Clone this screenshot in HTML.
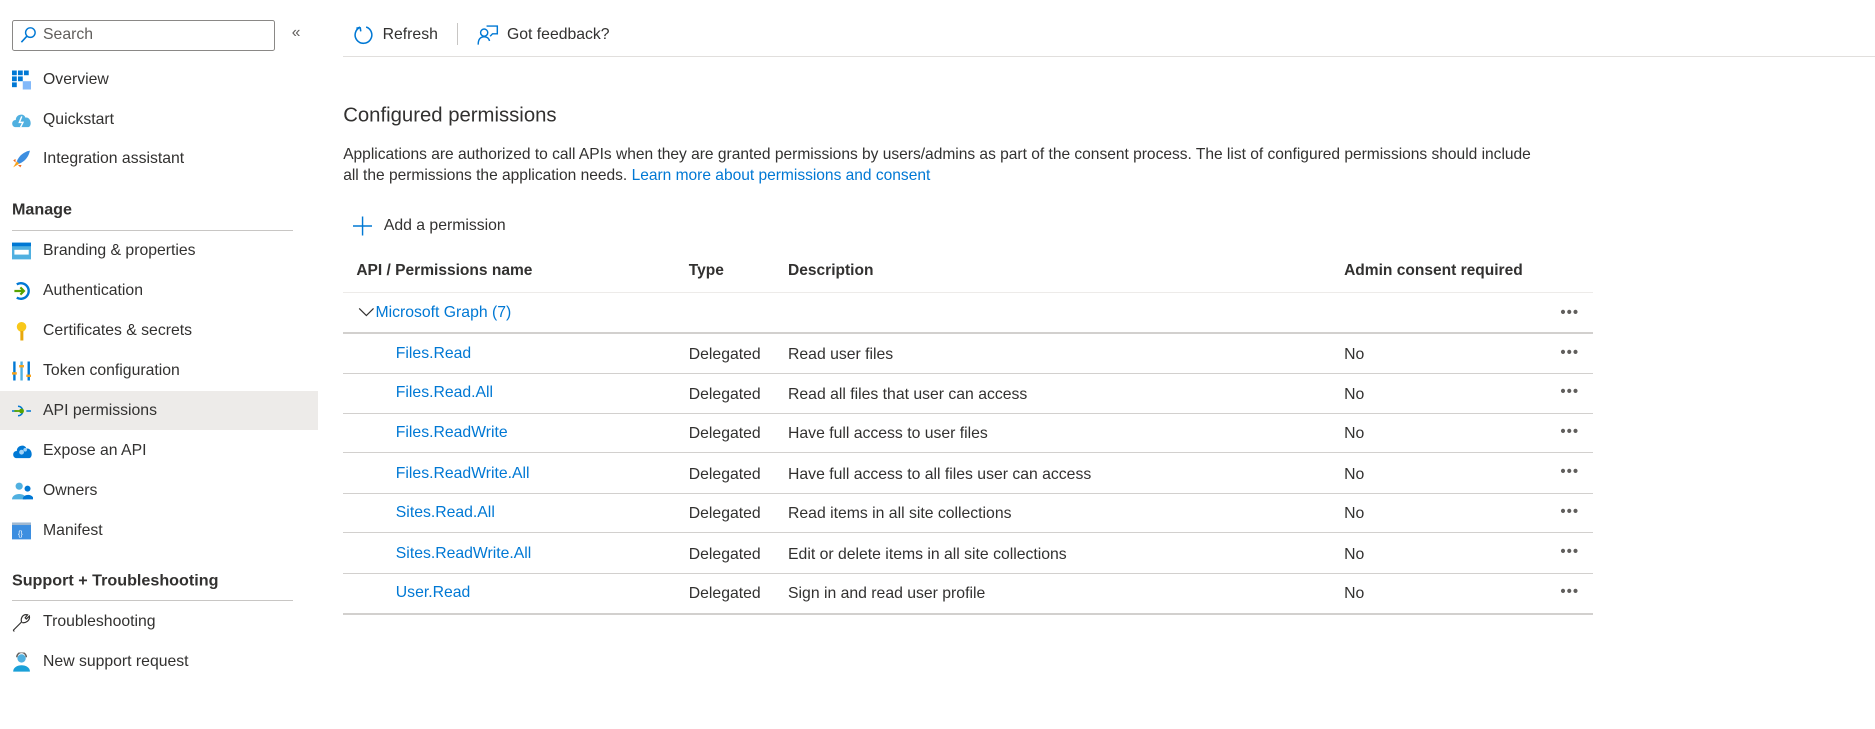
<!DOCTYPE html>
<html><head><meta charset="utf-8"><style>
html,body{margin:0;padding:0;background:#fff;overflow:hidden}
body{width:1875px;height:729px}
#z{zoom:1.1958;width:1568px;height:610px;position:relative;font-family:"Liberation Sans",sans-serif;font-size:13.2px;color:#323130}
.a{position:absolute;white-space:nowrap}
.c{transform:translateY(-50%)}
.blue{color:#0078d4}
.hr{position:absolute;height:1px;background:#e1dfdd}
.ico{position:absolute;width:16px;height:16px;transform:translateY(-50%)}
.dots{position:absolute;left:1305px;font-weight:bold;letter-spacing:1px;font-size:12px;color:#605e5c;transform:translateY(-50%)}
</style></head><body><div id="z">
<div class="a" style="left:10px;top:17px;width:218px;height:24px;border:1px solid #8a8886;border-radius:2px"></div>
<svg class="ico" style="left:16px;top:29px" viewBox="0 0 16 16"><circle cx="9.5" cy="6" r="4" fill="none" stroke="#0078d4" stroke-width="1.2"/><path d="M6.6 9 L2 14" stroke="#0078d4" stroke-width="1.3"/></svg>
<div class="a c" style="left:36px;top:29px;color:#605e5c">Search</div>
<div class="a c" style="left:244px;top:28px;color:#605e5c;font-size:13px">«</div>

<svg class="ico" style="left:295px;top:29px;width:18px;height:18px" viewBox="0 0 18 18"><path d="M6 2.5 A7 7 0 1 0 11 2.3" fill="none" stroke="#0078d4" stroke-width="1.3"/><path d="M6 2.5 L6.5 6 M6 2.5 L2.8 3.5" stroke="#0078d4" stroke-width="1.3" fill="none"/></svg>
<div class="a c" style="left:320px;top:29px">Refresh</div>
<div class="a" style="left:382px;top:19px;width:1px;height:19px;background:#c8c6c4"></div>
<svg class="ico" style="left:399px;top:29px;width:18px;height:18px" viewBox="0 0 18 18"><circle cx="6" cy="7" r="3" fill="none" stroke="#0078d4" stroke-width="1.2"/><path d="M1 17 C1 12 3 10.5 6 10.5 C9 10.5 10 12 10.5 14 M8 1.5 H17 V8 H13 L11 10" fill="none" stroke="#0078d4" stroke-width="1.2"/></svg>
<div class="a c" style="left:424px;top:29px">Got feedback?</div>
<div class="hr" style="left:287px;top:47px;width:1281px;background:#e1dfdd"></div>

<!-- sidebar -->
<div class="a" style="left:0;top:327px;width:266px;height:33px;background:#edebe9"></div>
<svg class="ico" style="left:10px;top:67px" viewBox="0 0 16 16"><g fill="#0078d4"><rect x="0" y="0" width="4" height="4"/><rect x="5" y="0" width="4" height="4"/><rect x="10" y="0" width="4" height="4"/><rect x="0" y="5" width="4" height="4"/><rect x="5" y="5" width="4" height="4"/><rect x="0" y="10" width="4" height="4"/></g><rect x="9" y="9" width="7" height="7" fill="#83b9f9"/></svg>
<div class="a c" style="left:36px;top:67px">Overview</div>
<svg class="ico" style="left:9px;top:100px;width:18px" viewBox="0 0 18 16"><path d="M4 14 C0 14 0 8 4 8 C4 3 11 2 12 6 C17 5 18 14 14 14Z" fill="#50b0e0"/><path d="M9 5 L7 10 H10 L8 14" stroke="#fff" stroke-width="1.2" fill="none"/></svg>
<div class="a c" style="left:36px;top:100px">Quickstart</div>
<svg class="ico" style="left:10px;top:133px" viewBox="0 0 16 16"><path d="M15 1 C10 2 6 5 4 10 L6 12 C11 10 14 6 15 1Z" fill="#3c8ee0"/><path d="M4 10 L1 15 L6 12Z" fill="#f7a21b"/><path d="M3 8 L1 9 L3 11Z M8 13 L7 15 L5 13Z" fill="#f26d1f"/></svg>
<div class="a c" style="left:36px;top:133px">Integration assistant</div>
<div class="a c" style="left:10px;top:176px;font-weight:bold;font-size:13.5px">Manage</div>
<div class="hr" style="left:10px;top:192px;width:235px;background:#c8c6c4"></div>
<svg class="ico" style="left:10px;top:210px" viewBox="0 0 16 16"><rect x="0" y="1" width="16" height="14" fill="#50b0e0"/><rect x="0" y="1" width="16" height="3" fill="#0078d4"/><rect x="2" y="7" width="12" height="4" fill="#fff"/></svg>
<div class="a c" style="left:36px;top:210px">Branding &amp; properties</div>
<svg class="ico" style="left:10px;top:243px" viewBox="0 0 16 16"><path d="M4 2.5 A6.5 6.5 0 1 1 4 13.5" fill="none" stroke="#0078d4" stroke-width="2"/><path d="M2 8 H10 M7 5 L10 8 L7 11" fill="none" stroke="#57a300" stroke-width="1.8"/></svg>
<div class="a c" style="left:36px;top:243px">Authentication</div>
<svg class="ico" style="left:10px;top:277px" viewBox="0 0 16 16"><circle cx="8" cy="4.5" r="4" fill="#f8c81a"/><rect x="7" y="8" width="2.5" height="8" fill="#e8a80c"/></svg>
<div class="a c" style="left:36px;top:277px">Certificates &amp; secrets</div>
<svg class="ico" style="left:10px;top:310px" viewBox="0 0 16 16"><rect x="1" y="0" width="2" height="16" fill="#0078d4"/><rect x="7" y="0" width="2" height="16" fill="#50b0e0"/><rect x="13" y="0" width="2" height="16" fill="#0078d4"/><rect x="0" y="9" width="4" height="2" fill="#f7a21b"/><rect x="6" y="3" width="4" height="2" fill="#f7a21b"/><rect x="12" y="11" width="4" height="2" fill="#f7a21b"/></svg>
<div class="a c" style="left:36px;top:310px">Token configuration</div>
<svg class="ico" style="left:10px;top:344px" viewBox="0 0 16 16"><path d="M0 8 H4 M12 8 H16" stroke="#0078d4" stroke-width="1.2"/><path d="M5 4 A4 4 0 1 1 5 12" fill="none" stroke="#0078d4" stroke-width="1.3"/><circle cx="8" cy="8" r="2" fill="#57a300"/><path d="M2 8H8" stroke="#57a300" stroke-width="1.5"/></svg>
<div class="a c" style="left:36px;top:344px">API permissions</div>
<svg class="ico" style="left:10px;top:377px;width:18px" viewBox="0 0 18 16"><path d="M4 14 C0 14 0 8 4 8 C4 3 11 2 12 6 C17 5 18 14 14 14Z" fill="#0078d4"/><circle cx="8" cy="9" r="2" fill="#9fd2f7"/><circle cx="11" cy="7" r="1.5" fill="#9fd2f7"/></svg>
<div class="a c" style="left:36px;top:377px">Expose an API</div>
<svg class="ico" style="left:10px;top:411px;width:18px" viewBox="0 0 18 16"><circle cx="6" cy="4" r="3" fill="#50b0e0"/><path d="M0 15 C0 9 12 9 12 15Z" fill="#50b0e0"/><circle cx="13" cy="6" r="2.5" fill="#0078d4"/><path d="M9 15 C9 10 18 10 18 15Z" fill="#0078d4"/></svg>
<div class="a c" style="left:36px;top:411px">Owners</div>
<svg class="ico" style="left:10px;top:444px" viewBox="0 0 16 16"><rect x="0" y="1" width="16" height="14" fill="#3c8ee0"/><rect x="0" y="1" width="16" height="2" fill="#a0b8d0"/><text x="5" y="12" font-size="6" fill="#fff" font-family="Liberation Sans">{}</text></svg>
<div class="a c" style="left:36px;top:444px">Manifest</div>
<div class="a c" style="left:10px;top:486px;font-weight:bold;font-size:13.5px">Support + Troubleshooting</div>
<div class="hr" style="left:10px;top:502px;width:235px;background:#c8c6c4"></div>
<svg class="ico" style="left:10px;top:520px" viewBox="0 0 16 16"><path d="M1 15 L8 8 C7 5 9 1 13 2 L11 4.5 L12 5.5 L14.5 3 C15.5 7 11 9 8.5 8.5" fill="none" stroke="#323130" stroke-width="1"/><path d="M1 15 L2 16" stroke="#323130"/></svg>
<div class="a c" style="left:36px;top:520px">Troubleshooting</div>
<svg class="ico" style="left:10px;top:554px" viewBox="0 0 16 16"><circle cx="8" cy="5" r="3.5" fill="#50b0e0"/><path d="M4 4 A4 4 0 0 1 12 4" fill="none" stroke="#605e5c" stroke-width="1.2"/><path d="M1 16 C1 9 15 9 15 16Z" fill="#1aa0d8"/></svg>
<div class="a c" style="left:36px;top:554px">New support request</div>

<!-- main -->
<div class="a c" style="left:287px;top:97px;font-size:17px">Configured permissions</div>
<div class="a" style="left:287px;top:121px;line-height:17.5px;width:1012px;white-space:normal;font-size:13px">Applications are authorized to call APIs when they are granted permissions by users/admins as part of the consent process. The list of configured permissions should include<br>all the permissions the application needs. <span class="blue">Learn more about permissions and consent</span></div>
<svg class="ico" style="left:295px;top:189px" viewBox="0 0 16 16"><path d="M8 0V16M0 8H16" stroke="#0078d4" stroke-width="1.2"/></svg>
<div class="a c" style="left:321px;top:189px">Add a permission</div>

<div class="a c" style="left:298px;top:227px;font-weight:bold;font-size:13px">API / Permissions name</div>
<div class="a c" style="left:576px;top:227px;font-weight:bold;font-size:13px">Type</div>
<div class="a c" style="left:659px;top:227px;font-weight:bold;font-size:13px">Description</div>
<div class="a c" style="left:1124px;top:227px;font-weight:bold;font-size:13px">Admin consent required</div>
<div class="hr" style="left:287px;top:244px;width:1045px;background:#edebe9"></div>
<svg class="ico" style="left:299px;top:261px;width:14px" viewBox="0 0 14 16"><path d="M1 5 L7 11 L13 5" fill="none" stroke="#323130" stroke-width="1"/></svg>
<div class="a c blue" style="left:314px;top:262px">Microsoft Graph (7)</div>
<div class="dots" style="top:262px">•••</div>
<div class="hr" style="left:287px;top:278px;width:1045px;background:#d2d0ce"></div>

<div class="a c blue" style="left:331px;top:296px">Files.Read</div><div class="a c" style="left:576px;top:297px">Delegated</div><div class="a c" style="left:659px;top:297px">Read user files</div><div class="a c" style="left:1124px;top:297px">No</div><div class="dots" style="top:295px">•••</div>
<div class="hr" style="left:287px;top:312px;width:1045px;background:#d2d0ce"></div>
<div class="a c blue" style="left:331px;top:329px">Files.Read.All</div><div class="a c" style="left:576px;top:330px">Delegated</div><div class="a c" style="left:659px;top:330px">Read all files that user can access</div><div class="a c" style="left:1124px;top:330px">No</div><div class="dots" style="top:328px">•••</div>
<div class="hr" style="left:287px;top:345px;width:1045px;background:#d2d0ce"></div>
<div class="a c blue" style="left:331px;top:362px">Files.ReadWrite</div><div class="a c" style="left:576px;top:363px">Delegated</div><div class="a c" style="left:659px;top:363px">Have full access to user files</div><div class="a c" style="left:1124px;top:363px">No</div><div class="dots" style="top:361px">•••</div>
<div class="hr" style="left:287px;top:378px;width:1045px;background:#d2d0ce"></div>
<div class="a c blue" style="left:331px;top:396px">Files.ReadWrite.All</div><div class="a c" style="left:576px;top:397px">Delegated</div><div class="a c" style="left:659px;top:397px">Have full access to all files user can access</div><div class="a c" style="left:1124px;top:397px">No</div><div class="dots" style="top:395px">•••</div>
<div class="hr" style="left:287px;top:412px;width:1045px;background:#d2d0ce"></div>
<div class="a c blue" style="left:331px;top:429px">Sites.Read.All</div><div class="a c" style="left:576px;top:430px">Delegated</div><div class="a c" style="left:659px;top:430px">Read items in all site collections</div><div class="a c" style="left:1124px;top:430px">No</div><div class="dots" style="top:428px">•••</div>
<div class="hr" style="left:287px;top:445px;width:1045px;background:#d2d0ce"></div>
<div class="a c blue" style="left:331px;top:463px">Sites.ReadWrite.All</div><div class="a c" style="left:576px;top:464px">Delegated</div><div class="a c" style="left:659px;top:464px">Edit or delete items in all site collections</div><div class="a c" style="left:1124px;top:464px">No</div><div class="dots" style="top:462px">•••</div>
<div class="hr" style="left:287px;top:479px;width:1045px;background:#d2d0ce"></div>
<div class="a c blue" style="left:331px;top:496px">User.Read</div><div class="a c" style="left:576px;top:497px">Delegated</div><div class="a c" style="left:659px;top:497px">Sign in and read user profile</div><div class="a c" style="left:1124px;top:497px">No</div><div class="dots" style="top:495px">•••</div>
<div class="hr" style="left:287px;top:513px;width:1045px;background:#d2d0ce"></div>
</div></body></html>
